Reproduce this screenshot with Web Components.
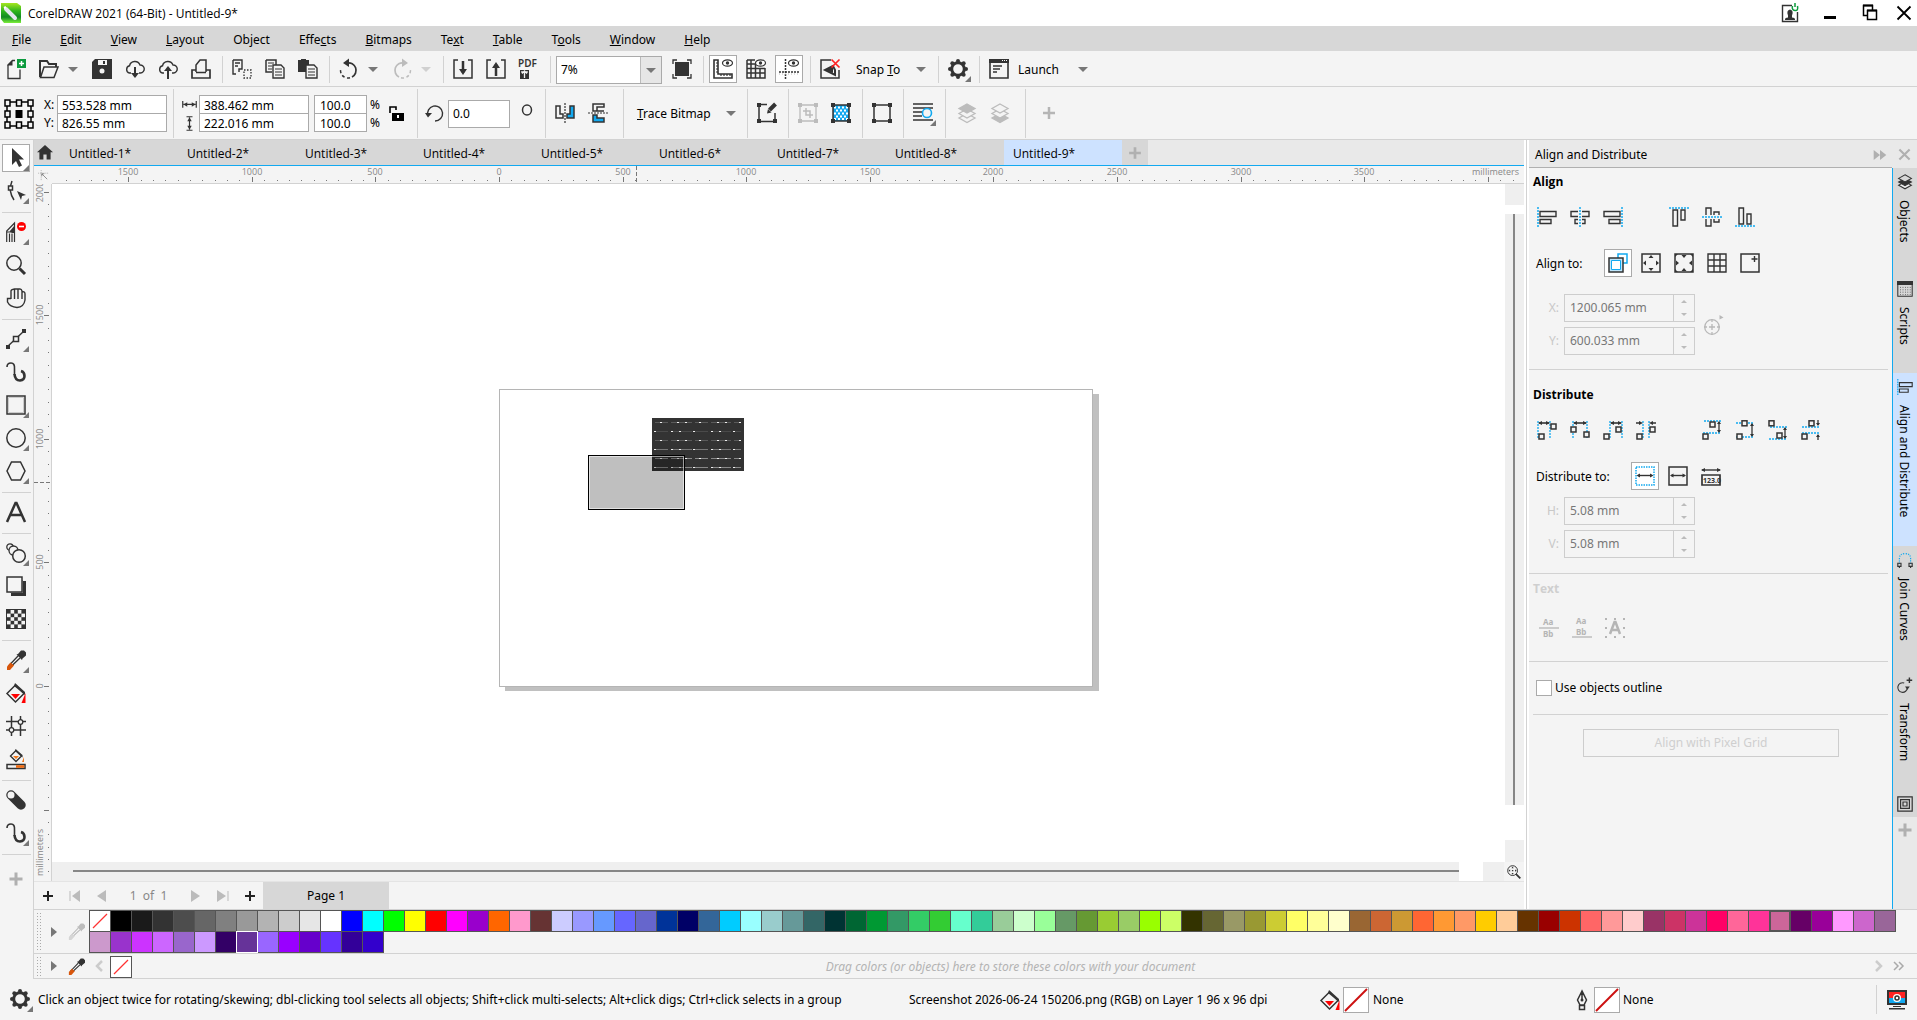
<!DOCTYPE html>
<html lang="en">
<head>
<meta charset="utf-8">
<title>CorelDRAW 2021 (64-Bit) - Untitled-9*</title>
<style>
html,body{margin:0;height:100%}
body{font:12px/16px "Noto Sans","Open Sans",sans-serif;color:#000;background:#f4f4f4;overflow:hidden;
 --bar:#f4f4f4;--line:#d2d2d2;--tab:#d7d7d7;--head:#e9e9e9;--blue:#12a9f0;--sel:#cde2ff;--narrow:"Open Sans","Noto Sans",sans-serif}
</style>
</head>
<body>
<cd-app></cd-app>
<script>
const BASE = `*{box-sizing:border-box}
button,input,select{font:inherit;color:inherit;margin:0;padding:0;border:0;background:none;border-radius:0;outline:0}
button,label{white-space:nowrap}
svg{display:block;flex:none}
a{color:inherit;text-decoration:none}`;

function define(name, css, html, after) {
  const t = document.createElement('template');
  t.innerHTML = `<style>${BASE}${css}</style>${html}`;
  customElements.define(name, class extends HTMLElement {
    connectedCallback() {
      if (this.shadowRoot) return;
      this.attachShadow({ mode: 'open' }).appendChild(t.content.cloneNode(true));
      if (after) after(this.shadowRoot, this);
    }
  });
}

/* ---------- icons, drawn on a 20x20 grid ---------- */
const K = '#333', B = '#12a9f0', G = '#bcbcbc';
const S = (d, c = K, w = 2, x = '') => `<path d="${d}" fill="none" stroke="${c}" stroke-width="${w}" ${x}/>`;
const F = (d, c = K) => `<path d="${d}" fill="${c}"/>`;
const DOT = 'stroke-dasharray="2 1"';
const sq = (x, y, w = 5, h = 5, c = K) => `<rect x="${x}" y="${y}" width="${w}" height="${h}" fill="#f4f4f4" stroke="${c}" stroke-width="1.5"/>`;
const cloud = 'M6 14H4.5A3.7 3.7 0 0 1 4.5 6.800A5.500 5.500 0 0 1 15 6A4 4 0 0 1 15.500 14H14';
const corners = (c = K) => F('M0 0h4v4h-4zM16 0h4v4h-4zM0 16h4v4h-4zM16 16h4v4h-4z', c);
const layer = (y, f, c) => `<path d="M10 ${y}l8 4.500l-8 4.500l-8 -4.500z" fill="${f}" stroke="${c}" stroke-width="1.300"/>`;
const gear = (() => { let p = '<circle cx="10" cy="10" r="6.300" fill="none" stroke="#333" stroke-width="3"/>';
  for (let i = 0; i < 8; i++) p += `<circle cx="${10 + 8 * Math.cos(i * Math.PI / 4)}" cy="${10 + 8 * Math.sin(i * Math.PI / 4)}" r="2" fill="#333"/>`; return p; })();
const dropper = (a, b, c) => F('M12 4l3-3.500h3l2 2v3l-3.500 3l-.5 1.500l-5.500-5.500z', a) + S('M12 6L3 15.500v1.500h1.500L14 8', b, 1.300) + F('M1 20v-3.500l3.500-4l3.500 3l-4 4.500z', c);
const bucket = `<path d="M9.500 2L18 10.500L9.500 19L1 10.500z" fill="none" stroke="${K}" stroke-width="1.500"/>` + F('M9 0l10 9v3L8 3z') + F('M5 11h9l-4.500 5z', '#f00') + F('M19.500 10v10h-4z', '#f00');
const eye = () => `<ellipse cx="14.500" cy="4" rx="5" ry="3.200" fill="#fff" stroke="${K}" stroke-width="1.200"/><circle cx="14.500" cy="4" r="1.700" fill="${K}"/>`;
const aabb = (a, b) => `<text x="4" y="${a}" font-size="8" font-weight="700" fill="#b5b5b5">Aa</text><text x="4" y="${b}" font-size="8" font-weight="700" fill="#b5b5b5">Bb</text>`;
const I = {
  newdoc: S('M2 5.500v14h12v-9M2 6l4.500-4.500H9', K, 1.300) + F('M1 6.500h5.500V1z') + `<path d="M11 0h9v9h-9z" fill="#0c9a3d"/>` + S('M15.500 2v5M13 4.500h5', '#fff', 1.500),
  open: S('M1 18V2h7l2 3h7v3', K, 2) + `<path d="M1.500 18.500L5 8h14l-4 10.500z" fill="#f4f4f4" stroke="${K}" stroke-width="1.500"/>`,
  save: F('M3 0h17v20H0V3z') + F('M6 1h9v5H6z', '#f4f4f4') + F('M11 2h2v3h-2z') + `<circle cx="10" cy="12" r="2.500" fill="#f4f4f4"/>`,
  cdown: S(cloud, K, 1.400) + S('M10 8v9', K, 2) + F('M6 14h8l-4 5z'),
  cup: S(cloud, K, 1.400) + S('M10 11v9', K, 2) + F('M6 12h8l-4-5z'),
  print: S('M5 13V6l4-5h6v12', K, 1.500) + S('M5 11H1v8h18v-8h-4M5 13.500h10', K, 1.700),
  cut: S('M1 1h9v9H7v3M1 1v14h3', K, 1.400) + S('M3 4h5M3 7h3', K, 1.400) + S('M12 11h7v8h-7z', K, 1.300, 'stroke-dasharray="1.500 1.500"'),
  copy: S('M1 1h10v5M1 1v12h6', K, 1.500) + S('M3 4h6M3 7h4M3 10h4', K, 1.200) + `<path d="M8 6h8l3 3v10H8z" fill="#f4f4f4" stroke="${K}" stroke-width="1.400"/>` + S('M10 10h7M10 13h7M10 16h7', K, 1.200),
  paste: F('M0 1h3V0h5v1h3v12H0z') + `<path d="M8 6h8l3 3v10H8z" fill="#f4f4f4" stroke="${K}" stroke-width="1.400"/>` + S('M10 10h7M10 13h7M10 16h7', K, 1.200),
  undo: S('M8 4A7.500 7.500 0 0 1 13 18', K, 1.700) + S('M11 18.800A7.500 7.500 0 0 1 2 9', K, 1.500, 'stroke-dasharray="3 2.500"') + F('M4 4l6-4.500v8.500z'),
  redo: S('M12 4A7.500 7.500 0 0 0 7 18', G, 1.700) + S('M9 18.800A7.500 7.500 0 0 0 18 9', G, 1.500, 'stroke-dasharray="3 2.500"') + F('M16 4l-6-4.500v8.500z', G),
  imp: S('M5 1H1v18h18V1h-4', K, 1.500) + S('M10 2v12', K, 2.500) + F('M6 10h8l-4 6z'),
  exp: S('M5 1H1v18h18V1h-4', K, 1.500) + S('M10 5v12', K, 2.500) + F('M6 9h8l-4-6z'),
  pdf: F('M1 11h9v9H1z') + S('M5.500 19v-7M3 14.500l2.500-2.500l2.500 2.500M3 12v2M8 12v2', '#f4f4f4', 1.300) + `<text x="-1" y="8" font-size="10" font-weight="600" fill="${K}">PDF</text>`,
  full: F('M3 3h14v14H3z') + S('M1 5V1h4M15 1h4v4M19 15v4h-4M5 19H1v-4', K, 1.300),
  rulers: S('M1 1h4v14h14v4H1z', K, 1.600) + S('M3 4h2M3 7h2M3 10h2M3 13h2M8 17v-2M11 17v-2M14 17v-2M17 17v-2', K, 1.200) + eye(),
  grid: S('M1 1h8M1 1v18h18V9M1 5h8M1 9.500h18M1 14h18M5 1v18M9.500 5v14M14 9v10', K, 1.500) + eye(),
  guides: S('M6.500 0v20M0 13h20', K, 1.500, 'stroke-dasharray="2 1"') + S('M0 15h20', '#bbb', 1, 'stroke-dasharray="1 2"') + eye(),
  snapoff: S('M11 1H1v18h18v-8', K, 1.500) + S('M13 7L5 11l10 5v-5z', K, 2) + F('M5 11l8-3v6z') + S('M11.500 .5l8 8M19.500 .5l-8 8', '#f22', 1.700),
  gear,
  launch: F('M0 0h20v4H0z') + S('M1 2v17h18V2', K, 1.600) + F('M13 1h1v1h-1zM15 1h1v1h-1zM17 1h1v1h-1z', '#fff') + S('M4 7h9M4 10h7M4 13h4', K, 1.400),
  mirh: S('M1 3v12h7v-4H5V3z', K, 1.500) + `<path d="M19 3v12h-7v-4h3V3z" fill="${B}" stroke="${K}" stroke-width="1.500"/>` + S('M10 0v20', K, 1.200, DOT),
  mirv: S('M16 8H5V1h11v3H9v4', K, 1.500) + `<path d="M16 19H5v-7h4v3h7z" fill="${B}" stroke="${K}" stroke-width="1.500"/>` + S('M0 10h20', K, 1.200, DOT),
  editbmp: S('M10 1.500H2v17h16V10', K, 1.500) + F('M0 0h4v4h-4zM0 16h4v4h-4zM16 16h4v4h-4z') + S('M12.500 7L18.500 1', K, 4) + F('M10 10.500l1-4.500l3.500 3.500z'),
  cropbmp: S('M2 2h16v16H2z', G, 1.300) + corners(G) + S('M8 5v7h7M5 8h7v7', G, 1.500),
  resample: `<path d="M2 2h16v16H2z" fill="${B}"/>` + S('M3 4.500h14M3 10.500h14M3 16h14', '#fff', 1.800, 'stroke-dasharray="2 2"') + S('M5 7.500h12M5 13.500h12', '#fff', 1.800, 'stroke-dasharray="2 2"') + S('M2 2h16v16H2z', K, 1.500) + corners(),
  frame: S('M2 2h16v16H2z', K, 1.500) + corners(),
  wrap: S('M0 1h20M0 5h20M0 9h9M0 13h9M0 17h20', K, 1.700) + `<circle cx="14" cy="10" r="4.500" fill="#f4f4f4" stroke="${B}" stroke-width="1.600"/>`,
  front: layer(10.5, '#f4f4f4', G) + layer(6, '#f4f4f4', G) + layer(1, G, G),
  back: layer(10.5, G, G) + layer(6, '#f4f4f4', G) + layer(1, '#f4f4f4', G),
  plus: S('M10 4v12M4 10h12', '#b5b5b5', 2.5), plusbig: S('M10 3.500v13M3.500 10h13', '#b0b0b0', 3), plusink: S('M10 5v10M5 10h10', '#222', 2),
  rot: S('M3 13A7.500 7.500 0 1 1 10 18', K, 1.400) + F('M0 10h7l-4 4.500z'),
  lock: S('M4 10V4h6v3', '#000', 1.600) + F('M6 10h12v8H6z', '#000') + F('M11 12h2v3h-2z', '#fff'),
  wid: S('M1 4v9M19 4v9M2 8.500h16', K, 1.600) + F('M2 8.500l5-3v6zM18 8.500l-5-3v6z'),
  hei: S('M6 1h8M6 19h8M10 2v16', K, 1.600) + F('M10 2l3 5h-6zM10 18l3-5h-6z'),
  pick: F('M6 0v17l4-4l3 6l3-1.500l-3-6h5z'),
  shape: S('M6 0C3 7 4 13 8 19', K, 1.500) + sq(2.500, 5, 4, 4) + F('M11 10l9 4l-4 1l-1 4z'),
  crop: F('M3.500 9.500L9 3v8H6.500z') + S('M.7 20V9L8.500 1v19M3.500 20v-8.500M6 20v-8.500M1 10h8', K, 1.200) + '<circle cx="15.500" cy="4.500" r="4.500" fill="#f00"/>' + S('M13 4.500h5', '#fff', 1.600),
  zoom: `<circle cx="8" cy="8" r="7.200" fill="none" stroke="${K}" stroke-width="1.500"/>` + S('M13.500 13.500L19 19', K, 3),
  hand: S('M5 11V3q0-1.500 3.500-2h5.500q1.500 0 2 2v1M8.500 1v10M12 1v10M16 4v7M16 4q3-1 3 2v6q-1 7-8 7.500Q4 19 1.500 14V10.500H5', K, 1.400),
  line: S('M1 18L18 2', K, 1.400) + F('M0 16h4v4H0zM16 0h4v4h-4z') + sq(7.500, 7.500, 5, 5),
  spline: S('M1 5Q1 1 5 1Q9 1 8.500 7V13', K, 1.600) + S('M8.500 12Q9 18.500 14 18.500Q18.500 18 18.500 14Q18.500 10 15 9', K, 2.600),
  rect: S('M1 1h18v18H1z', K, 1.500) + S('M2.500 2.500h15v15h-15z', '#ccc', 1),
  ellipse: `<circle cx="10" cy="10" r="9.200" fill="none" stroke="${K}" stroke-width="1.500"/>`,
  hex: S('M5.500 1h9l4.500 9l-4.500 9h-9L1 10z', K, 1.500),
  text: S('M1 20L9.500 1h1L19 20M4 13h12', K, 2.500),
  blend: `<circle cx="4" cy="4" r="3.200" fill="none" stroke="${K}" stroke-width="1.300"/><circle cx="7.500" cy="7.500" r="4.500" fill="#f4f4f4" stroke="${K}" stroke-width="1.300"/><circle cx="13" cy="13" r="6.300" fill="#f4f4f4" stroke="${K}" stroke-width="1.500"/>`,
  shadow: F('M5 5h15v15H5z') + F('M4 4h13v13H4z', '#aaa') + `<path d="M1 1h15v15H1z" fill="#f4f4f4" stroke="${K}" stroke-width="1.500"/>`,
  transp: (() => { let p = F('M0 0h20v20H0z'); for (let r = 0; r < 5; r++) for (let c = 0; c < 5; c++) if ((r + c) % 2) p += `<rect x="${1 + c * 3.6}" y="${1 + r * 3.6}" width="3.6" height="3.6" fill="#f4f4f4"/>`; return p; })(),
  drop: dropper(K, K, '#d8560c'), dropdim: dropper(G, G, '#d5d5d5'), bucket,
  mesh: S('M0 5.500h20M0 14h20M5.500 0v20M14.500 0v20', K, 1.500) + `<circle cx="14.500" cy="6" r="2.300" fill="#f4f4f4" stroke="${K}" stroke-width="1.300"/><circle cx="5.500" cy="14" r="2.300" fill="#f4f4f4" stroke="${K}" stroke-width="1.300"/>`,
  smart: S('M10 1.500l5.500 5.500L10 12.500L4.500 7z', K, 1.400) + F('M9.500 0l7 6v2.500L9 2z') + F('M7 7h6l-3 3zM18 8v5h-2z', '#f37a1c') + S('M1 15.500h18v4H1z', K, 1.500) + F('M10 16.200h8.300v2.600H10z', '#f06a10'),
  eraser: S('M5 5L15 15', K, 9.5, 'stroke-linecap="round"') + '<circle cx="5" cy="5" r="3.500" fill="#f4f4f4"/>',
  home: F('M10 0l10 9h-3v9h-5v-6H8v6H3V9H0z'),
  al: S('M1 0v20', B, 1.500, DOT) + S('M3 4.500h16v5H3zM3 12.500h11v4H3z', K, 1.400),
  ac: S('M10 0v20', B, 1.500, DOT) + S('M8 4.500H1v5h7M12 4.500h7v5h-7M8 12.500H5v4h3M12 12.500h3v4h-3', K, 1.400),
  ar: S('M19 0v20', B, 1.500, DOT) + S('M1 4.500h16v5H1zM6 12.500h11v4H6z', K, 1.400),
  at: S('M0 1h20', B, 1.500, DOT) + S('M4 3v16h4.500V3zM12 3v10h4V3z', K, 1.400),
  am: S('M0 10h20', B, 1.500, DOT) + S('M4 8V1h5v7M4 12v7h5v-7M12 8V5h5v3M12 12v3h5v-3', K, 1.400),
  ab: S('M0 19h20', B, 1.500, DOT) + S('M4 1v16h4.500V1zM12 7v10h4V7z', K, 1.400),
  tosel: S('M10 1h9v9H10z', B, 1.500) + `<path d="M1 5h14v14H1z" fill="#bfe6fb" stroke="${K}" stroke-width="1.500"/><path d="M3.500 7.500h9v9h-9z" fill="#fff" stroke="${B}"/>`,
  topage: S('M1 1h18v18H1z', K, 1.500) + F('M10 2l2.500 3h-5zM10 18l2.500-3h-5zM2 10l3-2.500v5zM18 10l-3-2.500v5z'),
  tocenter: S('M1 1h18v18H1z', K, 1.500) + F('M10 5l2.500-3h-5zM10 15l2.500 3h-5zM5 10l-3-2.500v5zM15 10l3-2.500v5zM1 1h3L1 4zM19 1h-3l3 3zM1 19v-3l3 3zM19 19v-3l-3 3z'),
  togrid: S('M1 1h18v18H1zM7 1v18M13 1v18M1 7h18M1 13h18', K, 1.400),
  topoint: S('M1 1h18v18H1z', K, 1.500) + S('M14.500 3v6M11.500 6h6', K, 1.400),
  dl: S('M1 1v18M13 1v18', B, 1.300, DOT) + S('M2 3h10', K, 1.600) + sq(2, 14) + sq(14, 4) + F('M1 3l4-2v4zM13 3l-4-2v4z'),
  dc: S('M3 1v18M17 1v18', B, 1.300, DOT) + S('M4 3h12', K, 1.600) + sq(1, 7) + sq(14, 12) + F('M3 3l4-2v4zM17 3l-4-2v4z'),
  dr: S('M7 1v18M19 1v18', B, 1.300, DOT) + S('M8 3h10', K, 1.600) + sq(1, 14) + sq(13, 7) + F('M7 3l4-2v4zM19 3l-4-2v4z'),
  dg: S('M7 1v18M13 1v18', B, 1.300, DOT) + S('M0 3h5M15 3h5', K, 1.600) + sq(1, 14) + sq(14, 7) + F('M7 3l-4-2v4zM13 3l4-2v4z'),
  dt: S('M2 1h18M1 13h18', B, 1.300, DOT) + S('M17 2v10', K, 1.300) + sq(8, 2) + sq(1, 14) + F('M17 1l-2 3h4zM17 13l-2-3h4z'),
  dm: S('M1 3h18M1 17h18', B, 1.300, DOT) + S('M17 4v12', K, 1.300) + sq(7, .8) + sq(2, 14) + F('M17 3l-2 3h4zM17 17l-2-3h4z'),
  db: S('M2 7h18M1 19h18', B, 1.300, DOT) + S('M17 8v10', K, 1.300) + sq(1, .8) + sq(9, 13) + F('M17 7l-2 3h4zM17 19l-2-3h4z'),
  dv: S('M1 7h18M1 13h18', B, 1.300, DOT) + S('M17 0v5M17 15v5', K, 1.300) + sq(8, .8) + sq(1, 14) + F('M17 6l-2-3h4zM17 14l-2 3h4z'),
  dosel: S('M1 1h18v18H1z', B, 1.500, 'stroke-dasharray="1.500 1"') + S('M3 9.500h14', K, 1.400) + F('M1.500 9.500l3.500-2v4zM18.500 9.500l-3.500-2v4z'),
  dopage: S('M1 1h18v18H1z', K, 1.500) + S('M3 9.500h14', K, 1.400) + F('M2 9.500l3.500-2v4zM18 9.500l-3.500-2v4z'),
  donum: S('M1 4h18', K, 1.400) + F('M0 4l4-2v4zM20 4l-4-2v4z') + S('M1 9h18v10H1z', K, 1.700) + `<text x="2" y="17" font-size="7" font-weight="700" fill="${K}">123.0</text>`,
  tb1: S('M0 10h20', '#b5b5b5', 1.300) + aabb(7, 19), tb2: S('M0 19h20', '#b5b5b5', 1.300) + aabb(6, 17),
  tb3: F('M0 0h2v2H0zM9 0h2v2H9zM18 0h2v2h-2zM0 9h2v2H0zM18 9h2v2h-2zM0 18h2v2H0zM9 18h2v2H9zM18 18h2v2h-2z', '#b5b5b5') + S('M5 16L9.500 4h1L15 16M7 12h6', '#b5b5b5', 2.500),
  target: '<circle cx="8" cy="12" r="7.300" fill="none" stroke="#b8b8b8" stroke-width="1.300"/>' + S('M8 4v3M8 17v3M0 12h3M13 12h3M8 9v6M5 12h6', '#b8b8b8', 1.300) + F('M15.500 0l4 2.500l-4 2z', '#b8b8b8'),
  ff: F('M1 3l9 7l-9 7zM10 3l9 7l-9 7z', '#b0b0b0'), x: S('M4 4l12 12M16 4L4 16', '#b0b0b0', 2.5),
  objects: layer(9.5, '#eee', K) + layer(5.5, K, K) + layer(1, '#d7d7d7', K),
  scripts: S('M1 1h18v18H1z', K, 1.300) + F('M0 0h20v5H0z') + S('M4 8h13M4 11h13M4 14h13M4 17h13', K, 1, 'stroke-dasharray="1 2"'),
  join: S('M3 15V8q0-6 7-6t7 6v7', B, 1.500, 'stroke-dasharray="1.500 1.500"') + S('M1 14h4v4H1zM15 14h4v4h-4zM3 18v2M17 18v2', K, 1.400),
  transform: S('M9 7.500a6 6 0 1 0 4 6', K, 1.400) + S('M15.500 .5v7M12 4h7', K, 1.800) + F('M10 12h6l-3 4z'),
  contour: S('M1 1h18v18H1zM4.500 4.500h11v11h-11zM7.500 7.500h5v5h-5z', K, 1.500),
  zoompan: `<circle cx="8" cy="8" r="7" fill="none" stroke="${K}" stroke-width="1.400"/>` + F('M8 2l1.500 2.500h-3zM8 14l1.500-2.500h-3zM2 8l2.500-1.500v3zM14 8l-2.500-1.500v3zM7 7h2v2H7z') + S('M13 13L19 19', K, 2.5),
  pen: S('M10 1v9M10 1L5.500 10L8 15h4l2.500-5zM7.500 15.500h5v4h-5z', K, 1.500) + '<circle cx="10" cy="10" r="1.500" fill="#333"/>',
  monitor: F('M0 0h20v15H0z') + F('M2 2h16v6H2z', '#f22') + F('M2 8h16v5H2z', B) + '<circle cx="10" cy="8" r="2.500" fill="none" stroke="#fff" stroke-width="3"/><circle cx="10" cy="8" r="2" fill="#fff" stroke="#333" stroke-width="1.500"/>' + F('M6 16h8v1H6zM2 18h16v1.500H2z'),
  user: S('M12 2.500H2.500v16h15V9', K, 1.400) + F('M5 16.500q0-2 3-2v-2q-2-5 2-6q4 1 2 6v2q3 0 3 2v.5H5z') + S('M12.500 3q-1 4 2.500 4.500T17.500 3M15 0v4', '#0c9a3d', 1.500),
  min: F('M4 13h12v3H4z', '#000'),
  restore: S('M3.500 2.500h9v10h-9z', '#000', 1.500) + '<path d="M7.500 7.500h9v9h-9z" fill="#fff" stroke="#000" stroke-width="1.500"/>' + F('M3 1.500h10v2H3zM7 6.500h10v2H7z', '#000'),
  close: S('M3.500 3.500l13 13M16.500 3.500l-13 13', '#000', 1.800),
  corner: S('M7 2v17M2 7h17', '#888', 1, 'stroke-dasharray="1.500 1.500"') + S('M8 8l9 9M8 12V8h4', '#777', 1.300)
};
const ic = (n, s = 20) => `<svg width="${s}" height="${s}" viewBox="0 0 20 20" overflow="visible" aria-hidden="true">${I[n]}</svg>`;

/* tool button: "on" draws the pressed box, "fly" the flyout mark */
class CdTool extends HTMLElement {
  connectedCallback() {
    if (this.shadowRoot) return;
    const n = this.getAttribute('icon');
    this.attachShadow({ mode: 'open' }).innerHTML = `<style>${BASE}
      :host{display:flex;align-items:flex-start;width:33px;height:33px;padding:2px;flex:none}
      button{display:flex;align-items:center;justify-content:center;width:28px;height:28px;position:relative;border:1px solid transparent;flex:none}
      :host([on]) button{background:#fff;border-color:#aaa}
      :host([fly]) button::after{content:"";position:absolute;right:0;bottom:0;border:3px solid transparent;border-right-color:#777;border-bottom-color:#777}
    </style><button aria-label="${this.getAttribute('label') || n}">${ic(n)}</button>`;
  }
}
customElements.define('cd-tool', CdTool);
const tool = (n, a = '') => `<cd-tool icon="${n}" ${a}></cd-tool>`;

define('cd-drop', `:host{display:flex;align-items:center;width:20px;height:28px;flex:none}
button{border:5px solid transparent;border-top-color:#777;border-bottom:0;width:0;height:0;margin-left:2px}
:host([dim]) button{border-top-color:#d0d0d0}`, `<button aria-label="More"></button>`);

define('cd-sep', `:host{display:flex;justify-content:center;width:8px;align-self:stretch;flex:none}i{width:1px;background:var(--line)}
:host([h]){width:auto;height:8px;align-items:center;padding:0 2px}:host([h]) i{width:100%;height:1px}`, `<i></i>`);

define('cd-title', `:host{display:flex;align-items:center;height:26px;background:#fff;flex:none;padding-right:3px}
h1{font:inherit;font-family:var(--narrow);margin:0 auto 0 7px;padding-top:2px}nav{display:flex;gap:20px}nav button{width:20px;height:20px}nav button:last-child{margin-left:-6px}`,
`<svg width="21" height="20" viewBox="0 0 21 20"><defs><linearGradient id="g" x2="0" y2="1"><stop stop-color="#a6e620"/><stop offset=".4" stop-color="#2fb51c"/><stop offset=".7" stop-color="#128a22"/><stop offset="1" stop-color="#7cf03a"/></linearGradient></defs><path d="M1 0h16l4 3v17H4l-3-4z" fill="url(#g)"/><path d="M6 6l9 9" stroke="#e4e6ee" stroke-width="4" stroke-linecap="round"/><path d="M4 5l2-1" stroke="#fff" stroke-width="2"/></svg>
<h1>CorelDRAW 2021 (64-Bit) - Untitled-9*</h1>
<nav><button aria-label="Account">${ic('user')}</button><button aria-label="Minimize">${ic('min')}</button><button aria-label="Restore">${ic('restore')}</button><button aria-label="Close">${ic('close')}</button></nav>`);

define('cd-menu', `:host{display:flex;align-items:center;height:25px;background:var(--tab);padding:2px 0 0 12px;gap:29px;flex:none}`,
['<u>F</u>ile','<u>E</u>dit','<u>V</u>iew','<u>L</u>ayout','Ob<u>j</u>ect','Effe<u>c</u>ts','<u>B</u>itmaps','Te<u>x</u>t','<u>T</u>able','T<u>o</u>ols','<u>W</u>indow','<u>H</u>elp'].map(m => `<button>${m}</button>`).join(''));

define('cd-standard', `:host{display:flex;align-items:center;height:36px;padding:5px 0 3px;border-bottom:1px solid var(--line);flex:none}
.zoom{position:relative;width:106px;height:28px;margin:0 4px 0 2px}
select{appearance:none;width:100%;height:28px;border:1px solid #aaa;background:#fff;padding-left:4px}
.zoom i{position:absolute;right:1px;top:1px;width:21px;height:26px;background:#e6e6e6;border-left:1px solid #bbb;pointer-events:none}
.zoom i::after{content:"";position:absolute;left:5px;top:11px;border:5px solid transparent;border-top-color:#777;border-bottom:0}
.snap{width:67px;text-align:left;padding-left:9px}.launch{width:60px;text-align:left;padding-left:2px}`,
tool('newdoc')+tool('open')+`<cd-drop></cd-drop>`+tool('save')+tool('cdown')+tool('cup')+tool('print')+`<cd-sep></cd-sep>`+tool('cut')+tool('copy')+tool('paste')+`<cd-sep></cd-sep>`+
tool('undo')+`<cd-drop></cd-drop>`+tool('redo')+`<cd-drop dim></cd-drop><cd-sep></cd-sep>`+tool('imp')+tool('exp')+tool('pdf')+`<cd-sep></cd-sep>
<div class="zoom"><select aria-label="Zoom level"><option>7%</option></select><i></i></div>`+tool('full')+`<cd-sep></cd-sep>`+tool('rulers','on')+tool('grid')+tool('guides','on')+`<cd-sep></cd-sep>`+tool('snapoff')+
`<button class="snap">Snap <u>T</u>o</button><cd-drop></cd-drop><cd-sep></cd-sep>`+tool('gear','fly')+`<cd-sep></cd-sep>`+tool('launch')+`<button class="launch">Launch</button><cd-drop></cd-drop>`);

define('cd-props', `:host{display:flex;align-items:center;height:53px;padding:2px 0 1px;border-bottom:1px solid var(--line);flex:none}
.pair{display:grid;grid-auto-rows:18px;align-items:center}
.pair input{width:110px;height:19px;border:1px solid #aaa;background:#fff;padding:1px 0 0 4px}
.pair label{padding-top:1px}
.pct input{width:53px;padding-left:5px}
.xy{grid-template-columns:13px 110px;margin-left:10px}.wh{grid-template-columns:17px 110px;margin-left:2px}.pct{grid-template-columns:53px 18px;column-gap:3px;margin-left:5px}
.ang{width:62px;height:28px;border:1px solid #aaa;background:#fff;padding-left:4px}
.tr{padding:0 0 0 10px;width:97px;text-align:left}.o{margin:0 0 0 4px}.lk{margin-left:-8px}.rt{margin:0 -4px 0 -2px}`,
`<svg class="o" width="30" height="30" viewBox="0 0 30 30"><path d="M3 3h24v24H3z" fill="none" stroke="#000" stroke-width="1.500"/><g fill="#f4f4f4" stroke="#000" stroke-width="1.500"><path d="M1 1h5v6H1zM12.500 1h5v6h-5zM24 1h5v6h-5zM1 12h5v6H1zM24 12h5v6h-5zM1 23h5v6H1zM12.500 23h5v6h-5zM24 23h5v6h-5z"/></g><path d="M11.500 11h7v8h-7z"/></svg>
<div class="pair xy"><label for="x">X:</label><input id="x" value="553.528 mm"><label for="y">Y:</label><input id="y" value="826.55 mm"></div>
<cd-sep style="margin:0 3px 0 2px"></cd-sep>
<div class="pair wh"><label for="w" aria-label="Width">${ic('wid',15)}</label><input id="w" value="388.462 mm"><label for="h" aria-label="Height">${ic('hei',15)}</label><input id="h" value="222.016 mm"></div>
<div class="pair pct"><input id="sx" value="100.0"><label for="sx">%</label><input id="sy" value="100.0"><label for="sy">%</label></div>
${tool('lock','class="lk"')}<cd-sep></cd-sep>${tool('rot','class="rt"')}<input class="ang" aria-label="Angle of rotation" value="0.0"><svg width="31" height="28" viewBox="0 0 31 28"><ellipse cx="17" cy="10" rx="4.500" ry="5" fill="none" stroke="#333" stroke-width="1.500"/></svg><cd-sep></cd-sep>`+
tool('mirh')+tool('mirv')+`<cd-sep style="margin-left:4px"></cd-sep><button class="tr"><u>T</u>race Bitmap</button><cd-drop></cd-drop><cd-sep style="margin-left:-1px"></cd-sep>`+tool('editbmp')+`<cd-sep></cd-sep>`+tool('cropbmp')+tool('resample')+`<cd-sep></cd-sep>`+tool('frame')+`<cd-sep></cd-sep>`+tool('wrap','fly')+`<cd-sep style="margin:0 2px 0 1px"></cd-sep>`+tool('front')+tool('back')+`<cd-sep style="margin:0 4px"></cd-sep>`+tool('plus'));

define('cd-toolbox', `:host{display:flex;flex-direction:column;width:34px;padding-top:2px;border-right:1px solid var(--line);flex:none}`,
tool('pick','on fly')+tool('shape','fly')+`<cd-sep h></cd-sep>`+tool('crop','fly')+tool('zoom')+tool('hand')+`<cd-sep h></cd-sep>`+tool('line','fly')+tool('spline')+tool('rect','fly')+tool('ellipse','fly')+tool('hex','fly')+`<cd-sep h></cd-sep>`+tool('text')+`<cd-sep h></cd-sep>`+tool('blend','fly')+tool('shadow')+tool('transp')+`<cd-sep h></cd-sep>`+tool('drop','fly')+tool('bucket')+tool('mesh')+tool('smart')+`<cd-sep h></cd-sep>`+tool('eraser')+tool('spline','fly')+`<cd-sep h style="margin-bottom:5px"></cd-sep>`+tool('plusbig'));

define('cd-tabs', `:host{display:flex;height:26px;background:var(--head);border-bottom:1px solid var(--blue);font-family:var(--narrow);flex:none}
button{width:118px;background:var(--tab);text-align:left;padding:2px 0 0 9px}
button.on{background:var(--sel)}.home,.add{display:flex;align-items:center;justify-content:center;padding:0 4px 0 0;width:26px}.add{padding:0}`,
`<button class="home" aria-label="Welcome screen">${ic('home',16)}</button>` + [1,2,3,4,5,6,7,8,9].map(n => `<button ${n === 9 ? 'class="on"' : ''}>Untitled-${n}*</button>`).join('') + `<button class="add" aria-label="New tab">${ic('plusbig',18)}</button>`);

/* ruler: 50 units per small tick, 500 per labelled tick */
const STEP = 12.36;
class CdRuler extends HTMLElement {
  connectedCallback() {
    if (this.shadowRoot) return;
    const v = this.hasAttribute('vertical'), zero = +this.getAttribute('zero'), len = +this.getAttribute('length'), mark = +this.getAttribute('mark'), last = +this.getAttribute('last');
    let ticks = '', dots = '', text = '';
    for (let k = -90; k < 130; k++) {
      const p = Math.round(zero + k * STEP);
      if (p < 3 || p > len) continue;
      if (k % 10 === 0) {
        ticks += v ? `M10 ${p}.5h5` : `M${p}.5 11v5`;
        if (k < last) {
          const val = Math.abs(k * 50);
          text += v ? `<text transform="translate(9 ${p}) rotate(-90)" text-anchor="middle">${val}</text>` : `<text x="${p}" y="9" text-anchor="middle">${val}</text>`;
        }
      } else dots += v ? `M14 ${p}.5h1` : `M${p} 14.500h1`;
    }
    text += v ? `<text transform="translate(9 692) rotate(-90)">millimeters</text>` : `<text x="1420" y="9">millimeters</text>`;
    const m = v ? `M0 ${mark}.5h18` : `M${mark}.5 0v18`;
    this.attachShadow({ mode: 'open' }).innerHTML = `<style>:host{display:block;overflow:hidden;flex:${v ? 'none' : '1'};${v ? 'width:18px;border-right' : 'height:18px;border-bottom'}:1px solid var(--line);box-sizing:border-box}
      svg{display:block}text{font:9px/11px var(--narrow);fill:#888}</style>
      <svg width="${v ? 18 : '100%'}" height="${v ? '100%' : 18}"><path d="${ticks}${dots}" stroke="#777" fill="none"/><path d="${m}" stroke="#777" stroke-dasharray="4 2"/>${text}</svg>`;
  }
}
customElements.define('cd-ruler', CdRuler);

/* drawing surface: page frame, photo and the selected rectangle lie on a free canvas */
define('cd-canvas', `:host{display:block;position:relative;overflow:hidden;flex:1;background:#fff}
.page,.shade,.pic,.box{position:absolute}
.shade{left:453px;top:210px;width:594px;height:297px;background:#c0c0c0}
.page{left:447px;top:205px;width:594px;height:298px;background:#fff;border:1px solid #b5b5b5}
.pic{left:600px;top:234px;width:92px;height:53px;background:#333}
.box{left:536px;top:271px;width:97px;height:55px;border:1px solid #000;background:rgba(0,0,0,.25);box-shadow:inset 0 0 0 1px rgba(255,255,255,.55)}`,
`<div class="shade"></div><div class="page"></div><svg class="pic" viewBox="0 0 92 53"></svg><div class="box"></div>`,
root => {
  let h = '';
  for (let r = 0; r < 6; r++) {
    const y = 4 + r * 9, o = r % 2 ? -6 : 0, br = ['#5a5a5a', '#4a4a4a', '#5a5a5a', '#777', '#888', '#888'][r];
    h += `<path d="M3 ${y}.5h13M19 ${y}.5h21M43 ${y}.5h13M59 ${y}.5h20M82 ${y}.5h7" stroke="${br}"/>`;
    for (const x of [9, 26, 34, 48, 66, 74, 88]) h += `<path d="M${x + o - 1} ${y}.5h2" stroke="#eee"/>`;
  }
  root.querySelector('.pic').innerHTML = h;
});

define('cd-scroll', `:host{display:flex;background:#fff;flex:none}
:host([axis=y]){flex-direction:column;width:19px}:host([axis=x]){height:19px}
.t{background:#efefef;flex:1;display:flex}.a,.z{background:#efefef}.t i{background:#868686}
:host([axis=y]) .a{height:21px;margin-bottom:9px}:host([axis=y]) .z{height:22px;margin-top:35px}
:host([axis=y]) .t i{width:2px;margin-left:8px}
:host([axis=x]) .a{width:21px}:host([axis=x]) .z{width:21px;margin-left:24px}
:host([axis=x]) .t i{height:2px;flex:1;margin-top:8px}`, `<div class="a"></div><div class="t" role="scrollbar"><i></i></div><div class="z"></div>`);

define('cd-pages', `:host{display:flex;align-items:stretch;height:28px;border-top:1px solid #e4e4e4;color:#888;flex:none}
button{display:flex;align-items:center;justify-content:center;width:27px}
span{display:flex;align-items:center;justify-content:center;width:67px;white-space:pre}
.p{width:126px;background:var(--tab);color:#000}`,
`<button aria-label="Add page before">${ic('plusink')}</button><button aria-label="First page"><svg width="12" height="12"><path d="M1 1v10" stroke="#bbb"/><path d="M11 0v12l-8-6z" fill="#bbb"/></svg></button><button aria-label="Previous page"><svg width="9" height="12"><path d="M9 0v12l-9-6z" fill="#bbb"/></svg></button><span>1  of  1</span><button aria-label="Next page"><svg width="9" height="12"><path d="M0 0v12l9-6z" fill="#bbb"/></svg></button><button aria-label="Last page"><svg width="12" height="12"><path d="M11 1v10" stroke="#bbb"/><path d="M0 0v12l9-6z" fill="#bbb"/></svg></button><button aria-label="Add page after">${ic('plusink')}</button><button class="p">Page 1</button>`);

define('cd-document', `:host{display:flex;flex-direction:column;flex:1;min-width:0}
.r{display:flex;flex:none;height:18px}.c{width:18px;padding:3px;flex:none}
.b{display:flex;flex:1;min-height:0}.col{display:flex;flex-direction:column;flex:1;min-width:0}.row{display:flex;flex:1;min-height:0}
.hs{display:flex;flex:none}.hs cd-scroll{flex:1}.hs button{width:20px;height:19px;display:flex;align-items:center;justify-content:center}`,
`<cd-tabs></cd-tabs><div class="r"><div class="c">${ic('corner',12)}</div><cd-ruler zero="447" length="1472" mark="584" last="80"></cd-ruler></div>
<div class="b"><cd-ruler vertical zero="502" length="698" mark="298" last="10"></cd-ruler><div class="col"><div class="row"><cd-canvas></cd-canvas><cd-scroll axis="y"></cd-scroll></div>
<div class="hs"><cd-scroll axis="x"></cd-scroll><button aria-label="Navigator">${ic('zoompan',14)}</button></div></div></div><cd-pages></cd-pages>`);

/* disabled measure field with spin buttons */
define('cd-spin', `:host{display:flex;height:28px;color:#c8c8c8}
label{width:31px;text-align:right;padding-right:5px;line-height:28px}
div{display:flex;border:1px solid #cdcdcd;width:131px}input{width:108px;padding-left:5px;color:#777}
span{display:flex;flex-direction:column;justify-content:space-between;align-items:center;width:22px;border-left:1px solid #cdcdcd;padding:5px 0}
button{border:3px solid transparent;width:0;height:0}.u{border-bottom-color:#bbb;border-top:0}.d{border-top-color:#bbb;border-bottom:0}`,
`<label for="v"><slot></slot></label><div><input id="v" disabled><span><button class="u" disabled aria-label="Up"></button><button class="d" disabled aria-label="Down"></button></span></div>`,
(r, host) => { r.querySelector('input').value = host.getAttribute('value'); });

define('cd-section', `:host{display:block;padding:5px 0 0 4px;margin-right:4px;border-bottom:1px solid var(--line)}
h2{font:inherit;font-family:var(--narrow);font-weight:700;margin:0;line-height:18px}:host([dim]) h2{color:#cfcfcf}`, `<h2><slot name="title"></slot></h2><slot></slot>`);

define('cd-docker', `:host{display:flex;flex-direction:column;width:363px;flex:none}
.main{flex:1}
.row{display:flex;align-items:center;height:33px}.row .g{width:33px}
.icons{margin:10px 0 13px -2px}
.lbl{white-space:nowrap;padding-left:3px}
.xy{display:flex;align-items:center;margin-top:14px}.fields{display:flex;flex-direction:column;gap:5px}
.chk{display:flex;align-items:center;gap:3px;margin:0 4px 0 4px;padding:18px 0 18px 3px;border-bottom:1px solid var(--line)}
.chk input{appearance:none;width:16px;height:16px;border:1px solid #aaa;background:#fff}
.px{display:block;width:256px;height:28px;border:1px solid #cdcdcd;color:#cfcfcf;margin:14px auto 0 54px}`,
`<div class="main">
<cd-section style="height:202px"><span slot="title">Align</span>
 <div class="row icons">${tool('al')+tool('ac')+tool('ar')}<i class="g"></i>${tool('at')+tool('am')+tool('ab')}</div>
 <div class="row"><span class="lbl" style="width:69px">Align to:</span>${tool('tosel','on')+tool('topage')+tool('tocenter')+tool('togrid')+tool('topoint')}</div>
 <div class="xy"><div class="fields"><cd-spin value="1200.065 mm">X:</cd-spin><cd-spin value="600.033 mm">Y:</cd-spin></div><div style="margin-left:9px">${ic('target')}</div></div>
</cd-section>
<cd-section style="height:204px;padding-top:16px"><span slot="title">Distribute</span>
 <div class="row icons">${tool('dl')+tool('dc')+tool('dr')+tool('dg')}<i class="g"></i>${tool('dt')+tool('dm')+tool('db')+tool('dv')}</div>
 <div class="row"><span class="lbl" style="width:96px">Distribute to:</span>${tool('dosel','on')+tool('dopage')+tool('donum')}</div>
 <div class="fields" style="margin-top:4px"><cd-spin value="5.08 mm">H:</cd-spin><cd-spin value="5.08 mm">V:</cd-spin></div>
</cd-section>
<cd-section dim style="height:88px;padding-top:6px"><span slot="title">Text</span><div class="row" style="margin-top:14px">${tool('tb1')+tool('tb2')+tool('tb3')}</div></cd-section>
<div class="chk"><input type="checkbox" id="o"><label for="o">Use objects outline</label></div>
<button class="px" disabled>Align with Pixel Grid</button></div>`);

define('cd-side', `:host{display:flex;flex-direction:column;width:25px;border-left:1px solid var(--blue);background:var(--head);flex:none}
button{display:flex;flex-direction:column;align-items:center;gap:10px;background:var(--tab);padding-top:6px;white-space:nowrap}
span{writing-mode:vertical-rl;line-height:18px;padding-right:2px}.on{background:var(--sel)}.add{background:none;padding-top:3px}`,
[['objects','Objects',107],['scripts','Scripts',98],['al','Align and Distribute',173,'on'],['join','Join Curves',125],['transform','Transform',119],['contour','',27]].map(([i,t,h,c='']) => `<button class="${c}" style="height:${h}px" aria-label="${t || 'Contour'}">${ic(i,16)}${t ? `<span>${t}</span>` : ''}</button>`).join('') + `<button class="add" aria-label="Add docker">${ic('plusbig')}</button>`);

define('cd-dock', `:host{display:flex;flex:none;width:393px}
.gap{width:5px;background:#fff;display:flex;justify-content:center;flex:none}.gap::after{content:"";width:1px;background:var(--line)}
.c{display:flex;flex-direction:column;flex:1}
header{display:flex;align-items:center;gap:4px;height:28px;background:var(--head);padding:1px 3px 0 6px;flex:none}
header span{margin-right:auto}header button{width:20px;height:20px;display:flex;align-items:center;justify-content:center}
cd-docker{border-top:1px solid #b0b0b0;margin-top:-1px}.low{display:flex;flex:1}`,
`<div class="gap"></div><div class="c"><header><span>Align and Distribute</span><button aria-label="Collapse">${ic('ff',14)}</button><button aria-label="Close docker">${ic('x',17)}</button></header><div class="low"><cd-docker></cd-docker><cd-side></cd-side></div></div>`);

const COLORS = 'none 000 1a1a1a 333 4d4d4d 666 808080 999 b3b3b3 ccc e6e6e6 fff 00f 0ff 0f0 ff0 f00 f0f 90c f60 f9c 633 ccf 99f 69f 66f 66c 039 006 369 0cf 9ff 9cc 699 366 033 063 093 396 3c6 3c3 6fc 3c9 9c9 cfc 9f9 696 693 9c3 9c6 9f0 cf6 330 663 996 993 cc3 ff6 ff9 ffc 963 c63 c93 f63 f93 f96 fc0 fc9 630 900 c30 f66 f99 fcc 936 c36 c39 f06 f69 f39 c69 606 909 f9f c6c 969 c9c 93c c3f c6f 96c c9f 306 639 96f 90f 60c 63f 309 30c'.split(' ');
const PAL = `.grip{width:5px;margin:2px 10px 2px 2px;background:radial-gradient(circle,#aaa 1px,transparent 1px) 0 0/3px 3px}
.tri{border:6px solid transparent;border-left-color:#777;border-right:0;border-top-width:5px;border-bottom-width:5px;width:0;height:0}
.s{display:block;width:22px;height:22px;border:1px solid #555;margin:0 -1px -1px 0}
.none{background:#fff}`;
const nil = '<svg width="20" height="20"><path d="M3 17L17 3" stroke="#f33" stroke-width="1.200"/></svg>';
define('cd-palette', PAL + `:host{display:flex;align-items:center;min-height:44px;border-top:1px solid var(--line);border-bottom:1px solid var(--line);padding-right:20px;flex:none}
.grip{align-self:stretch}.e{margin:0 4px 0 11px;width:17px}.w{display:flex;flex-wrap:wrap;flex:1;padding-bottom:1px;align-self:flex-start}
.sel{border-color:#fff;position:relative}.hot{border-width:2px}`,
`<div class="grip"></div><button class="tri" aria-label="Palette menu"></button><button class="e" aria-label="Eyedropper">${ic('dropdim',17)}</button><div class="w">${COLORS.map((c, i) => c === 'none' ? `<button class="s none" aria-label="No colour">${nil}</button>` : `<button class="s${i === 93 ? ' sel' : i === 80 ? ' hot' : ''}" aria-label="#${c}" style="background:#${c}"></button>`).join('')}</div>`);

define('cd-docpalette', PAL + `:host{display:flex;align-items:center;height:25px;border-bottom:1px solid var(--line);flex:none;padding-right:12px}
.grip{align-self:stretch}.e{margin:0 9px 0 11px;width:17px}.s{margin-left:6px}
p{flex:1;margin:0;padding:1px 0 0 16px;text-align:center;font-style:italic;color:#b3b3b3}.r{display:flex;gap:9px}`,
`<div class="grip"></div><button class="tri" aria-label="Palette menu"></button><button class="e" aria-label="Eyedropper">${ic('drop',17)}</button><button aria-label="Scroll left"><svg width="10" height="12"><path d="M8 1L3 6l5 5" fill="none" stroke="#ccc" stroke-width="2.500"/></svg></button><button class="s none" aria-label="No colour">${nil}</button>
<p>Drag colors (or objects) here to store these colors with your document</p><div class="r"><button aria-label="Scroll right"><svg width="10" height="12"><path d="M2 1l5 5l-5 5" fill="none" stroke="#ccc" stroke-width="2.500"/></svg></button><button aria-label="Expand"><svg width="12" height="12"><path d="M1 2l4 4l-4 4M6 2l4 4l-4 4" fill="none" stroke="#aaa" stroke-width="1.500"/></svg></button></div>`);

define('cd-status', `:host{display:flex;align-items:center;height:41px;flex:none;white-space:nowrap}
.hint{width:871px}.obj{width:411px}.cell{display:flex;align-items:center;gap:3px;width:252px}.pen{width:auto;gap:2px;margin-right:auto}
.sw{width:26px;height:26px;border:1px solid #aaa;background:#fff}.cell span{margin-left:1px}
.hint,.obj{padding-top:1px}
.g{margin:0 1px 0 4px}cd-sep{padding:6px 0}.m{margin:0 10px 0 7px}`,
(() => { const sw = `<svg class="sw" viewBox="0 0 24 24"><path d="M1 23L23 1" stroke="#c11" stroke-width="2"/></svg>`;
return `${tool('gear','fly class="g"')}<span class="hint">Click an object twice for rotating/skewing; dbl-clicking tool selects all objects; Shift+click multi-selects; Alt+click digs; Ctrl+click selects in a group</span><span class="obj">Screenshot 2026-06-24 150206.png (RGB) on Layer 1 96 x 96 dpi</span><div class="cell">${ic('bucket')}${sw}<span>None</span></div><div class="cell pen">${ic('pen')}${sw}<span>None</span></div><cd-sep></cd-sep><button class="m" aria-label="Color proof">${ic('monitor')}</button>`; })());

define('cd-app', `:host{display:flex;flex-direction:column;height:100vh;background:var(--bar)}
.m{display:flex;flex:1;min-height:0}.c{display:flex;flex-direction:column;flex:1;min-width:0}.d{display:flex;flex:1;min-height:0}`,
`<cd-title></cd-title><cd-menu></cd-menu><cd-standard></cd-standard><cd-props></cd-props><div class="m"><cd-toolbox></cd-toolbox><div class="c"><div class="d"><cd-document></cd-document><cd-dock></cd-dock></div><cd-palette></cd-palette><cd-docpalette></cd-docpalette></div></div><cd-status></cd-status>`);
</script>
</body>
</html>
